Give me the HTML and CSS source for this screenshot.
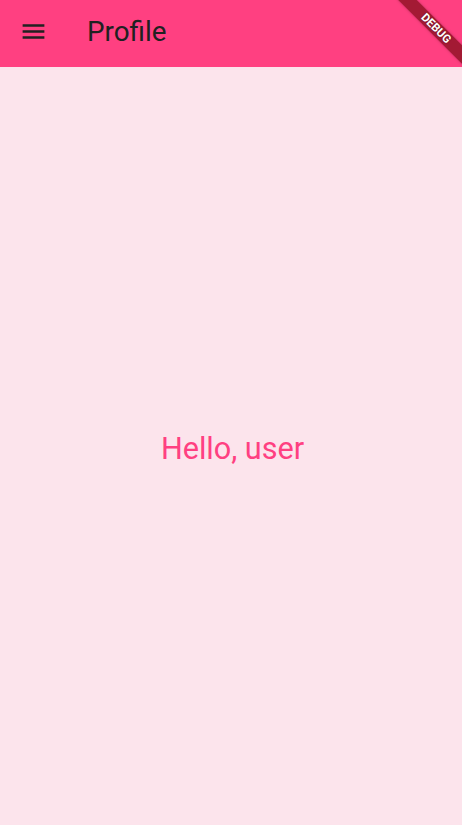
FILE: index.html
```html
<!DOCTYPE html>
<html>
<head>
<meta charset="utf-8">
<link rel="stylesheet" href="styles.css">
</head>
<body>
<div class="app">
  <header class="appbar">
    <button class="menu" aria-label="menu">
      <svg viewBox="0 0 24 24" width="29" height="29"><path d="M3 18h18v-2H3v2zm0-5h18v-2H3v2zm0-7v2h18V6H3z" fill="#212121"/></svg>
    </button>
    <h1 class="title">Profile</h1>
  </header>
  <main class="content">
    <p class="hello">Hello, user</p>
  </main>
  <div class="banner">DEBUG</div>
</div>
</body>
</html>
```
FILE: styles.css
```css
* { box-sizing: border-box; }
html, body { margin: 0; padding: 0; }
body {
  width: 462px;
  height: 825px;
  overflow: hidden;
  font-family: Roboto, "Liberation Sans", sans-serif;
  background: #fce4ec;
}
.app {
  position: relative;
  width: 462px;
  height: 825px;
  display: flex;
  flex-direction: column;
  overflow: hidden;
}
.appbar {
  height: 67px;
  flex: none;
  background: #ff4081;
  display: flex;
  align-items: center;
  padding-bottom: 5px;
}
.menu {
  width: 67px;
  height: 62px;
  border: 0;
  padding: 0;
  background: transparent;
  display: flex;
  align-items: center;
  justify-content: center;
}
.menu svg { display: block; }
.title {
  margin: 0 0 0 20px;
  font-size: 27.8px;
  font-weight: 400;
  color: #212121;
}
.content {
  flex: 1;
  display: flex;
  align-items: center;
  justify-content: center;
  padding-top: 4px;
  padding-left: 3px;
}
.hello {
  margin: 0;
  font-size: 30.6px;
  color: #ff4081;
}
.banner {
  position: absolute;
  left: 388px;
  top: 21.5px;
  width: 96px;
  height: 13px;
  transform: rotate(45deg);
  background: rgba(140, 16, 32, 0.8);
  color: #fff;
  font-size: 11.5px;
  font-weight: 700;
  line-height: 13px;
  text-align: center;
  text-shadow: 0 0 2px rgba(0,0,0,0.4);
  box-shadow: 0 0 3px rgba(0,0,0,0.25);
}
```
